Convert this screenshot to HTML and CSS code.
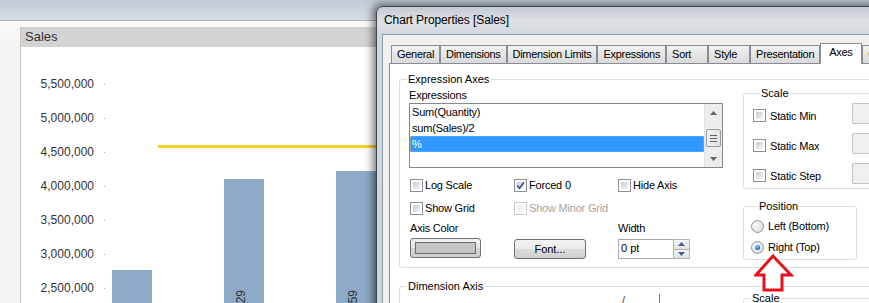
FILE: index.html
```html
<!DOCTYPE html>
<html lang="en">
<head>
    <meta charset="UTF-8">
    <title>Chart Properties [Sales]</title>
    <link rel="stylesheet" href="styles.css">
</head>
<body>
<div class="screen">
    <div class="appbar"></div>

    <div class="sheet">
        <div class="chart">
            <div class="chart-caption">Sales</div>
            <div class="chart-body">
                <div class="yaxis">
                    <div class="ytick">5,500,000</div>
                    <div class="ytick">5,000,000</div>
                    <div class="ytick">4,500,000</div>
                    <div class="ytick">4,000,000</div>
                    <div class="ytick">3,500,000</div>
                    <div class="ytick">3,000,000</div>
                    <div class="ytick">2,500,000</div>
                </div>
                <div class="plot">
                    <div class="bar" style="height:33px"></div>
                    <div class="bar" style="height:124px"><span class="bar-value">4,102,829</span></div>
                    <div class="bar" style="height:132px"><span class="bar-value">4,216,659</span></div>
                    <!-- % expression, drawn on top of the bars -->
                    <div class="pct-line" style="top:98px"></div>
                </div>
            </div>
        </div>
    </div>

    <div class="dialog">
        <div class="dialog-title">Chart Properties [Sales]</div>
        <div class="dialog-client">
            <div class="tabs">
                <div class="tab">General</div>
                <div class="tab">Dimensions</div>
                <div class="tab">Dimension Limits</div>
                <div class="tab">Expressions</div>
                <div class="tab">Sort</div>
                <div class="tab">Style</div>
                <div class="tab">Presentation</div>
                <div class="tab active">Axes</div>
                <div class="tab">Colors</div>
            </div>

            <div class="tab-panel">
                <fieldset class="group">
                    <legend>Expression Axes</legend>
                    <div class="expr-axes">
                        <div class="expr-left">
                            <div class="field-label first">Expressions</div>
                            <div class="listbox">
                                <div class="list-items">
                                    <div class="list-item">Sum(Quantity)</div>
                                    <div class="list-item">sum(Sales)/2</div>
                                    <div class="list-item selected">%</div>
                                </div>
                                <div class="scrollbar">
                                    <div class="sb-btn"><svg width="7" height="4" viewBox="0 0 7 4"><path d="M0 4 L3.5 0 L7 4 Z" fill="#606060"/></svg></div>
                                    <div class="sb-thumb"><span></span><span></span><span></span></div>
                                    <div class="sb-track"></div>
                                    <div class="sb-btn"><svg width="7" height="4" viewBox="0 0 7 4"><path d="M0 0 L3.5 4 L7 0 Z" fill="#606060"/></svg></div>
                                </div>
                            </div>

                            <div class="opts">
                                <div class="check"><span class="cb"></span>Log Scale</div>
                                <div class="check"><span class="cb"><svg width="9" height="9" viewBox="0 0 9 9"><path d="M1 4.5 L3.5 7.2 L8 1.2" fill="none" stroke="#44589a" stroke-width="1.8"/></svg></span>Forced 0</div>
                                <div class="check"><span class="cb"></span>Hide Axis</div>

                                <div class="check"><span class="cb"></span>Show Grid</div>
                                <div class="check disabled"><span class="cb"></span>Show Minor Grid</div>
                                <div></div>

                                <div class="field-label">Axis Color</div>
                                <div></div>
                                <div class="field-label">Width</div>

                                <div class="color-btn"><span class="swatch"></span></div>
                                <div class="btn">Font...</div>
                                <div class="spin">
                                    <div class="spin-field">0 pt</div>
                                    <div class="spin-btns">
                                        <div class="spin-btn"><svg width="7" height="4" viewBox="0 0 7 4"><path d="M0 4 L3.5 0 L7 4 Z" fill="#3f5f8c"/></svg></div>
                                        <div class="spin-btn"><svg width="7" height="4" viewBox="0 0 7 4"><path d="M0 0 L3.5 4 L7 0 Z" fill="#3f5f8c"/></svg></div>
                                    </div>
                                </div>
                            </div>
                        </div>

                        <div class="expr-right">
                            <fieldset class="group scale">
                                <legend>Scale</legend>
                                <div class="scale-grid">
                                    <div class="check"><span class="cb"></span>Static Min</div>
                                    <div class="scale-field"></div>
                                    <div class="check"><span class="cb"></span>Static Max</div>
                                    <div class="scale-field"></div>
                                    <div class="check"><span class="cb"></span>Static Step</div>
                                    <div class="scale-field"></div>
                                </div>
                            </fieldset>

                            <fieldset class="group position">
                                <legend>Position</legend>
                                <div class="radio"><span class="rb"></span>Left (Bottom)</div>
                                <div class="radio"><span class="rb on"></span>Right (Top)</div>
                            </fieldset>
                        </div>
                    </div>
                </fieldset>

                <fieldset class="group dim">
                    <legend>Dimension Axis</legend>
                    <div class="dim-row">
                        <div class="dim-preview"><span class="dim-glyph">/</span><span class="dim-marker"></span></div>
                        <fieldset class="group scale2">
                            <legend>Scale</legend>
                        </fieldset>
                    </div>
                </fieldset>
            </div>
        </div>
    </div>

    <!-- red callout pointing at the Position group -->
    <svg class="callout" width="40" height="38" viewBox="0 0 40 38">
        <path d="M19 2 L37 21 L28 21 L28 36 L10 36 L10 21 L2 21 Z" fill="#fff" stroke="#e5121a" stroke-width="3" stroke-linejoin="miter"/>
    </svg>
</div>
</body>
</html>
```

FILE: styles.css
```css
* {
    box-sizing: border-box;
}

body {
    margin: 0;
    font-family: "Liberation Sans", Arial, sans-serif;
    color: #000;
}

.screen {
    position: relative;
    width: 869px;
    height: 303px;
    overflow: hidden;
    background: #f5f5f5;
}

/* ---- QlikView sheet behind the dialog ---- */

.appbar {
    height: 21px;
    background: linear-gradient(#bfcad4, #d7dee5);
    border-bottom: 1px solid #a9b3bc;
}

.sheet {
    padding: 6px 0 0 20px;
    background: linear-gradient(#fafafa, #f4f4f4 20px);
}

.chart {
    width: 430px;
    height: 276px;
    background: #fff;
    border-left: 1px solid #c9c9c9;
}

.chart-caption {
    height: 20px;
    padding-left: 4px;
    background: #d3d3d3;
    color: #333;
    font-size: 13px;
    line-height: 20px;
}

.chart-body {
    display: flex;
    height: 256px;
}

.yaxis {
    flex-shrink: 0;
    width: 84px;
    padding-top: 20px;
}

.ytick {
    display: flex;
    justify-content: flex-end;
    align-items: center;
    height: 34px;
    font-size: 12px;
    color: #333;
}

.ytick::after {
    content: "";
    width: 1px;
    height: 1px;
    margin-left: 10px;
    background: #aaa;
}

.plot {
    position: relative;
    flex: 1;
    display: flex;
    align-items: flex-end;
    gap: 72px;
    padding-left: 7px;
}

.bar {
    display: flex;
    flex-direction: column;
    justify-content: flex-end;
    align-items: center;
    width: 40px;
    background: #8eaac9;
}

.bar-value {
    writing-mode: vertical-rl;
    transform: rotate(180deg);
    margin: 0 7px -40px 0;
    font-size: 12px;
    line-height: 1;
    color: #333;
}

.pct-line {
    position: absolute;
    left: 53px;
    right: 0;
    height: 3px;
    background: #f6d131;
}

/* ---- dialog window ---- */

.dialog {
    position: absolute;
    left: 376px;
    top: 6px;
    width: 540px;
    height: 330px;
    padding-left: 5px;
    border: 1px solid #3e454c;
    border-radius: 7px 7px 0 0;
    background: linear-gradient(#c4cad1, #dde1e5 14px, #d3d8de 28px, #cdd4db);
    box-shadow: -3px -2px 9px rgba(0, 0, 0, 0.55);
}

.dialog-title {
    height: 27px;
    padding-left: 2px;
    font-size: 12px;
    line-height: 27px;
    letter-spacing: -0.1px;
}

.dialog-client {
    height: 300px;
    padding: 8px 0 0 6px;
    background: #f0f0f0;
    border: 1px solid #8f9ba7;
    border-right: none;
}

.tabs {
    position: relative;
    z-index: 1;
    display: flex;
    align-items: flex-end;
    height: 20px;
    padding-left: 2px;
}

.tab {
    min-width: 42px;
    height: 18px;
    padding: 0 5px;
    border: 1px solid #898c95;
    border-bottom: none;
    background: linear-gradient(#f3f3f3, #e6e6e6 45%, #dadada);
    font-size: 11px;
    line-height: 16px;
    letter-spacing: -0.3px;
    white-space: nowrap;
}

.tab.active {
    height: 21px;
    margin-bottom: -1px;
    padding: 0 8px;
    background: #fff;
    line-height: 17px;
}

.tab-panel {
    height: 260px;
    padding: 8px 0 0 9px;
    background: #fff;
    border: 1px solid #898c95;
    border-right: none;
    font-size: 11px;
}

/* group boxes */

.group {
    margin: 0;
    padding: 0;
    min-width: 0;
    border: 1px solid #d5dfe5;
    border-radius: 3px;
}

.group > legend {
    margin-left: 7px;
    padding: 0 1px;
    font-size: 11px;
    line-height: 14px;
}

.expr-axes {
    display: flex;
    padding: 0 0 7px 9px;
}

.expr-left {
    flex-shrink: 0;
    width: 314px;
    margin-right: 20px;
}

.expr-right {
    flex: 1;
}

.field-label {
    font-size: 11px;
    line-height: 14px;
    letter-spacing: -0.2px;
}

.field-label.first {
    margin-top: 2px;
}

/* list box */

.listbox {
    display: flex;
    height: 65px;
    margin-top: 1px;
    border: 1px solid #828790;
}

.list-items {
    flex: 1;
}

.list-item {
    height: 16px;
    padding-left: 2px;
    line-height: 16px;
    letter-spacing: -0.2px;
}

.list-item.selected {
    background: #3399ff;
    color: #fff;
    outline: 1px dotted #d9a050;
    outline-offset: -1px;
}

.scrollbar {
    display: flex;
    flex-direction: column;
    width: 18px;
    background: #ececec;
    border-left: 1px solid #e2e2e2;
}

.sb-btn {
    display: flex;
    align-items: center;
    justify-content: center;
    height: 17px;
}

.sb-thumb {
    display: flex;
    flex-direction: column;
    align-items: center;
    justify-content: center;
    gap: 2px;
    height: 18px;
    margin: 8px 1px 0;
    border: 1px solid #9b9b9b;
    border-radius: 2px;
    background: linear-gradient(90deg, #f2f2f2, #e2e2e2);
}

.sb-thumb span {
    width: 7px;
    height: 1px;
    background: #606060;
}

.sb-track {
    flex: 1;
}

/* option grid below the list */

.opts {
    display: grid;
    grid-template-columns: 104px 104px 1fr;
    grid-template-rows: 23px 20px 17px 21px;
    align-items: start;
    margin: 10px 0 0 1px;
}

.check,
.radio {
    display: flex;
    align-items: center;
    gap: 2px;
    height: 14px;
    line-height: 14px;
    letter-spacing: -0.2px;
    white-space: nowrap;
}

.cb {
    flex-shrink: 0;
    width: 13px;
    height: 13px;
    padding: 2px;
    border: 1px solid #8e8f8f;
    background: linear-gradient(135deg, #c9cdd2, #f4f5f6) content-box, linear-gradient(#fff, #fff) padding-box;
}

.cb svg {
    display: block;
    margin: -1px;
}

.check.disabled {
    color: #a3a3a3;
}

.check.disabled .cb {
    border-color: #c9c9c9;
    background: linear-gradient(135deg, #ececec, #f8f8f8) content-box, linear-gradient(#fff, #fff) padding-box;
}

.rb {
    flex-shrink: 0;
    width: 13px;
    height: 13px;
    padding: 3px;
    border: 1px solid #8e8f8f;
    border-radius: 50%;
    background: radial-gradient(circle at 35% 35%, #fafafa, #d2d5d9) padding-box;
}

.rb.on {
    background: radial-gradient(circle at 40% 35%, #8fd3fb, #1f7ac4 55%, #174f84) content-box, radial-gradient(circle at 35% 35%, #fafafa, #d2d5d9) padding-box;
    border-radius: 50%;
}

.color-btn {
    width: 71px;
    height: 20px;
    padding: 3px 4px;
    border: 1px solid #707070;
    border-radius: 3px;
    background: linear-gradient(#f2f2f2, #e6e6e6 50%, #d6d6d6 50%, #cfcfcf);
}

.swatch {
    display: block;
    height: 100%;
    background: #c6c6c6;
    border: 1px solid #6d6d6d;
}

.btn {
    width: 72px;
    height: 20px;
    margin-top: 1px;
    border: 1px solid #707070;
    border-radius: 3px;
    background: linear-gradient(#f2f2f2, #ebebeb 50%, #dddddd 50%, #cfcfcf);
    text-align: center;
    line-height: 18px;
}

.spin {
    display: flex;
    width: 72px;
    height: 20px;
    margin-top: 1px;
}

.spin-field {
    flex: 1;
    padding-left: 2px;
    border: 1px solid #abadb3;
    border-top-color: #a0a3aa;
    border-right: none;
    background: #fff;
    line-height: 16px;
}

.spin-btns {
    display: flex;
    flex-direction: column;
    width: 17px;
}

.spin-btn {
    display: flex;
    flex: 1;
    align-items: center;
    justify-content: center;
    border: 1px solid #b4b4b4;
    background: linear-gradient(#f6f6f6, #e1e1e1);
}

.spin-btn + .spin-btn {
    border-top: none;
}

/* right hand groups */

.scale {
    padding: 3px 0 4px 9px;
}

.scale-grid {
    display: grid;
    grid-template-columns: 99px 1fr;
    grid-auto-rows: 21px;
    row-gap: 9px;
    align-items: center;
}

.scale-grid .check,
.position .radio {
    gap: 4px;
}

.scale-grid .check {
    margin-top: 4px;
}

.scale-field {
    height: 21px;
    border: 1px solid #c3c3c3;
    border-right: none;
    border-radius: 2px 0 0 2px;
    background: #f0f0f0;
}

.position {
    width: 114px;
    margin-top: 10px;
    padding: 6px 0 5px 7px;
}

.position .radio + .radio {
    margin-top: 7px;
}

.dim {
    height: 60px;
    margin-top: 11px;
}

.dim-row {
    display: flex;
}

.dim-preview {
    display: flex;
    flex-shrink: 0;
    width: 343px;
    padding: 1px 0 0 222px;
}

.dim-glyph {
    color: #444;
    line-height: 12px;
}

.dim-marker {
    width: 1px;
    height: 12px;
    margin-left: 34px;
    background: #3a8ad8;
}

.scale2 {
    flex: 1;
    height: 40px;
    margin-top: -2px;
}

/* callout arrow laid over the screenshot */

.callout {
    position: absolute;
    left: 754px;
    top: 254px;
}
```
